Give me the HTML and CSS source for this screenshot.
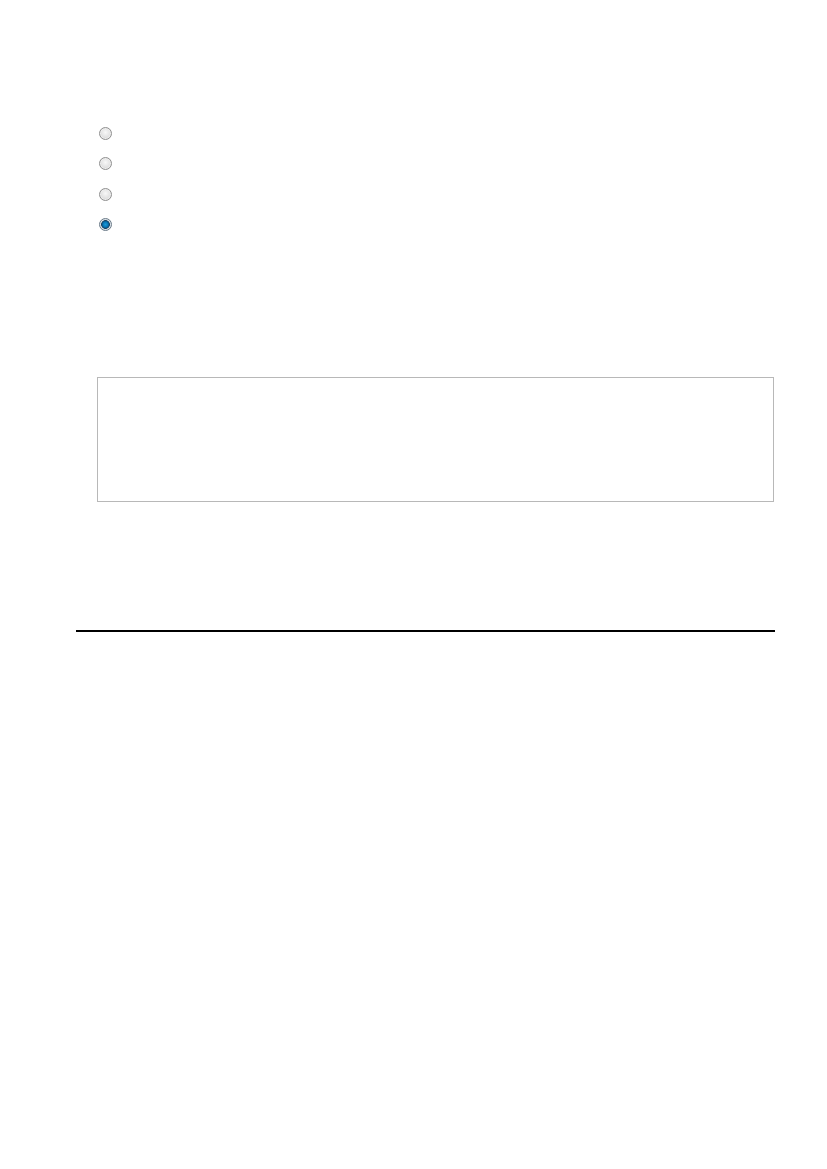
FILE: index.html
```html
<!DOCTYPE html>
<html lang="en">
<head>
<meta charset="UTF-8">
<title>Form</title>
<link rel="stylesheet" href="styles.css">
</head>
<body>
    <main class="page">
        <ul class="choices">
            <li class="choice"><span class="radio"></span></li>
            <li class="choice"><span class="radio"></span></li>
            <li class="choice"><span class="radio"></span></li>
            <li class="choice"><span class="radio checked"></span></li>
        </ul>

        <div class="answer-box"></div>

        <hr class="rule">
    </main>
</body>
</html>
```

FILE: styles.css
```css
/* Global */
body {
    margin: 0;
    padding: 0;
    background-color: #fff;
    font-family: "Liberation Sans", Arial, sans-serif;
}

.page {
    width: 699px;
    padding: 127px 0 0 76px;
}

/* Radio list */
.choices {
    list-style: none;
    margin: 0;
    padding: 0 0 0 23px;
}

.choice {
    height: 30.4px;
}

.radio {
    display: block;
    width: 13px;
    height: 13px;
    box-sizing: border-box;
    border-radius: 50%;
    border: 1px solid #8f8f8f;
    background: radial-gradient(circle at 50% 40%, #f8f8f8 0%, #e4e4e4 50%, #c8c8c8 100%);
    box-shadow: inset 0 0 0 1px #eeeeee;
}

.radio.checked {
    border-color: #6a7a88;
    box-shadow: none;
    background: radial-gradient(circle, #1b9ad8 0%, #0a78b8 30%, #0b5a8e 44%, #1d3f5c 52%, #dfe6ec 60%, #c2cbd3 100%);
}

/* Text box */
.answer-box {
    margin: 128px 0 0 21px;
    width: 677px;
    height: 125px;
    box-sizing: border-box;
    border: 1px solid #b8b8b8;
}

/* Divider */
.rule {
    margin: 128px 0 0 0;
    height: 2px;
    border: none;
    background-color: #000;
}
```
